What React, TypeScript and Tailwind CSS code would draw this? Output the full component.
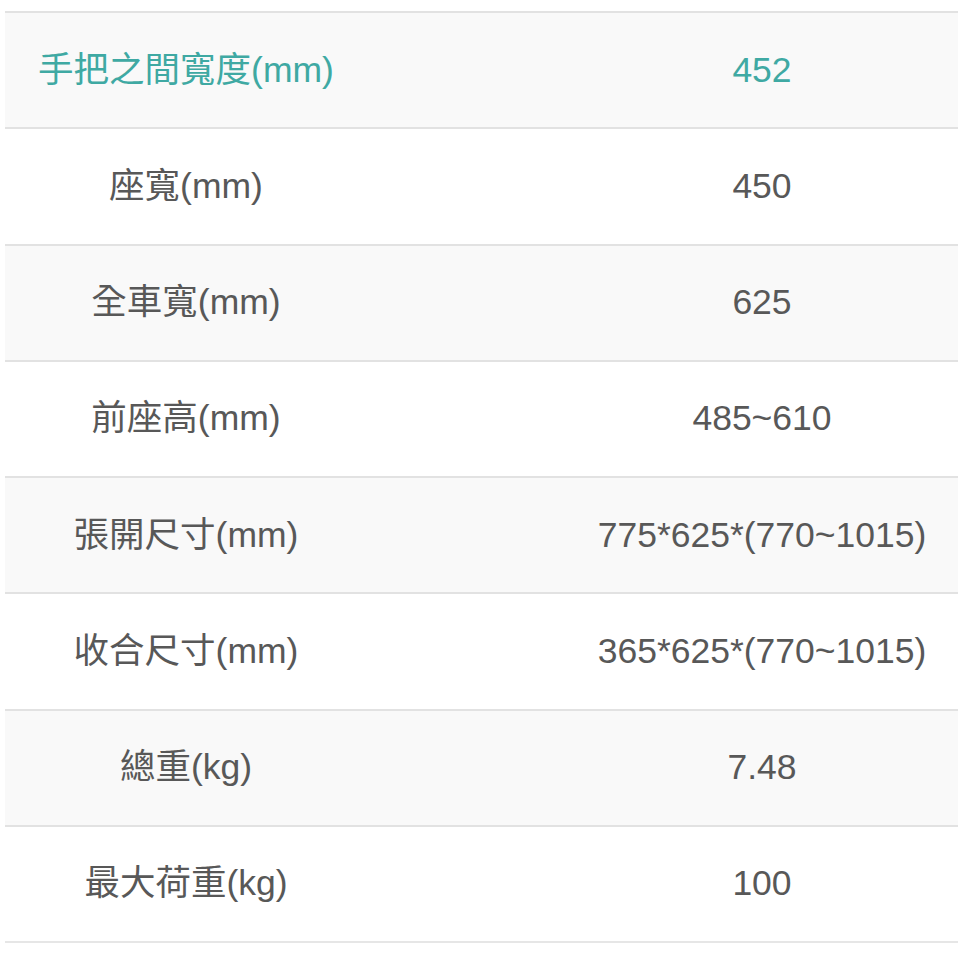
import React from 'react';

const rows: [string, string][] = [
  ['手把之間寬度(mm)', '452'],
  ['座寬(mm)', '450'],
  ['全車寬(mm)', '625'],
  ['前座高(mm)', '485~610'],
  ['張開尺寸(mm)', '775*625*(770~1015)'],
  ['收合尺寸(mm)', '365*625*(770~1015)'],
  ['總重(kg)', '7.48'],
  ['最大荷重(kg)', '100'],
];

const App: React.FC = () => {
  return (
    <div className="w-[960px] h-[960px] bg-white pt-[11px] pl-[5px]">
      <div
        className="w-[953px] border-b-2 border-[#e6e6e6]"
        style={{ fontFamily: '"Liberation Sans", "Noto Sans CJK TC", sans-serif' }}
      >
        {rows.map(([label, value], i) => (
          <div
            key={label}
            className={`grid grid-cols-[362px_199px_392px] items-center h-[116.25px] border-t-2 border-[#e2e2e2] text-[35.5px] ${
              i % 2 === 0 ? 'bg-[#f9f9f9]' : 'bg-white'
            } ${i === 0 ? 'text-[#3fa9a3]' : 'text-[#585858]'}`}
          >
            <div className="text-center whitespace-nowrap">{label}</div>
            <div />
            <div className="text-center whitespace-nowrap">{value}</div>
          </div>
        ))}
      </div>
    </div>
  );
};

export default App;
